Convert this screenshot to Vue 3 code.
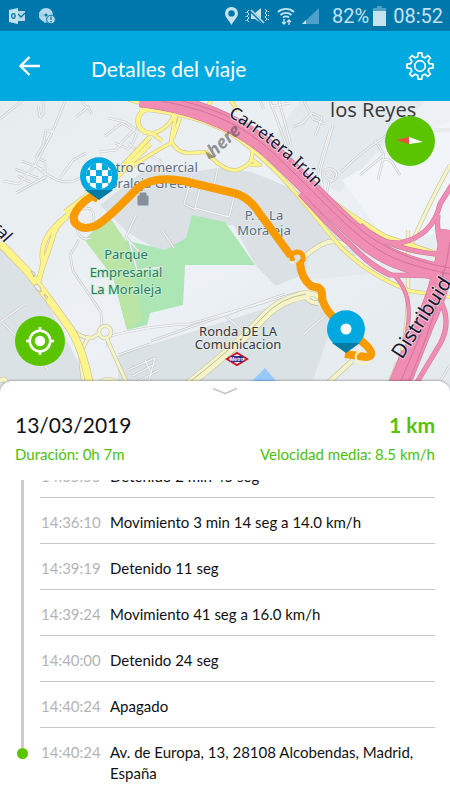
<template>
    <div class="trip">
        <div class="status">
            <div class="status__side">
                <svg width="17" height="16" viewBox="0 0 17 16">
                    <path d="M8 3h8v10H8z" fill="#b5d9ea" />
                    <path d="M9 6l3 3 4-4" fill="none" stroke="#0077ab" stroke-width="1.3" />
                    <path d="M0 2l9-2v16l-9-2z" fill="#c5e2ef" />
                    <ellipse cx="4.400" cy="8" rx="1.700" ry="2.400" fill="none" stroke="#0077ab" stroke-width="1.300" />
                </svg>
                <svg width="17" height="16" viewBox="0 0 17 16">
                    <circle cx="7" cy="7" r="7" fill="#b5d9ea" />
                    <path d="M7 7L0 4v6zM7 7l3 7-5 1z" fill="#a3cfe4" />
                    <circle cx="7" cy="7" r="1.600" fill="#0077ab" />
                    <circle cx="12" cy="11.500" r="4.300" fill="#b5d9ea" stroke="#0077ab" />
                    <path d="M12 8.500v3.500M12 13v1.500" stroke="#0077ab" stroke-width="1.300" />
                </svg>
            </div>
            <div class="status__side status__side_right">
                <svg width="13" height="18" viewBox="0 0 13 18">
                    <path fill-rule="evenodd" d="M6.500 0A6.300 6.300 0 0 0 0 6.400C0 10 4 13 6.500 18 9 13 13 10 13 6.400A6.300 6.300 0 0 0 6.500 0zm0 3.200a3.200 3.200 0 1 1 0 6.400 3.200 3.200 0 0 1 0-6.400z" fill="#c5e2ef" />
                </svg>
                <svg width="25" height="18" viewBox="0 0 25 18">
                    <path d="M6 6h4l6-5v15l-6-4H6z" fill="#c5e2ef" />
                    <path d="M5 3l13 13" stroke="#0077ab" stroke-width="3" />
                    <path d="M6 3l13 13" stroke="#c5e2ef" stroke-width="1.500" />
                    <path d="M4 3L2 5l2 2-2 2 2 2-2 2 2 2M1 5v1M1 9v1M1 13v1M20 2l2 2-2 2 2 2-2 2 2 2-2 2M23 4l1 1M23 8l1 1M23 12l1 1" fill="none" stroke="#c5e2ef" />
                </svg>
                <svg width="18" height="18" viewBox="0 0 18 18">
                    <path d="M1 5a12 12 0 0 1 16 0M3.500 8a8 8 0 0 1 11 0M6 10.500a5 5 0 0 1 6 0" fill="none" stroke="#c5e2ef" stroke-width="1.800" />
                    <path d="M7 12v5M5 15l2 2 2-2M12 18v-5M10 15l2-2 2 2" fill="none" stroke="#c5e2ef" stroke-width="1.400" />
                </svg>
                <svg width="18" height="18" viewBox="0 0 18 18">
                    <path d="M17 1v16H0z" fill="#4fa0c8" />
                    <path d="M4 13v4H0z" fill="#c5e2ef" />
                </svg>
                <span class="status__text">82%</span>
                <svg width="13" height="20" viewBox="0 0 13 20">
                    <path d="M4 0h5v2h4v4H0V2h4z" fill="#4fa0c8" />
                    <path d="M0 5h13v15H0z" fill="#c5e2ef" />
                </svg>
                <span class="status__text">08:52</span>
            </div>
        </div>

        <header class="bar">
            <button class="bar__button" aria-label="Volver">
                <svg width="22" height="20" viewBox="0 0 22 20">
                    <path d="M21 10H2M10.500 1L1.500 10l9 9" fill="none" stroke="#fff" stroke-width="2.300" />
                </svg>
            </button>
            <h1 class="bar__title">Detalles del viaje</h1>
            <button class="bar__button" aria-label="Ajustes">
                <svg width="28" height="28" viewBox="-14 -14 28 28">
                    <path :d="gearPath" fill="none" stroke="#fff" stroke-width="1.700" stroke-linejoin="round" />
                    <circle r="5.300" fill="none" stroke="#fff" stroke-width="1.700" />
                </svg>
            </button>
        </header>

        <section class="map">
            <svg class="map__canvas" viewBox="0 101 450 294" preserveAspectRatio="xMidYMid slice">
                <defs>
                    <linearGradient id="land" x1="0" y1="0" x2="1" y2="1">
                        <stop offset="0" stop-color="#e7eced" />
                        <stop offset=".5" stop-color="#edf1f5" />
                        <stop offset="1" stop-color="#e3e9ec" />
                    </linearGradient>
                    <path id="irun" d="M228 116Q280 146 330 204" />
                </defs>
                <rect y="101" width="450" height="294" fill="url(#land)" />

                <!-- districts -->
                <path d="M100 205L150 166l40 6 28-4 34 4 48 20 70 60-38 10-56 24-20-20-22-40-35-8-8 22-30 12-34-20z" fill="#dae0e3" />
                <path d="M0 247l40 42 48 92v14H0zM118 355l190-60 26 24-26 76H118z" fill="#dbe2e5" />
                <path d="M300 101h125l-86 92-70-48zM305 280l63-6-26-34-32 10z" fill="#e3e9ec" />
                <path d="M342 180l108-60v110l-60 16z" fill="#f1f4f8" />
                <path d="M85 240l23-25 17 25 40 10 21-12 6-23 33 7 30 43h-70l-2 40-33 8-3 12-20 5-14-53z" fill="#ade6b5" />
                <path d="M108 215l17 25 18 80-16 10-14-53-28-37z" fill="#bae5a5" />
                <path d="M244 389l21-21 18 21z" fill="#98caff" />

                <!-- local streets -->
                <g fill="none" stroke-linejoin="round">
                    <g v-for="pass in streetPasses" :key="pass.color" :stroke="pass.color" :stroke-width="pass.width">
                        <path v-for="street in streets" :key="street" :d="street" />
                    </g>
                </g>

                <!-- secondary roads -->
                <g fill="none" stroke-linejoin="round">
                    <g v-for="pass in palePasses" :key="pass.color" :stroke="pass.color">
                        <path v-for="road in paleRoads" :key="road.d" :d="road.d" :stroke-width="road.width + pass.extra" />
                    </g>
                    <path d="M178 391Q234 348 264 316 280 298 306 294" stroke="#bdbd9a" stroke-width="1" />
                </g>
                <g fill="none" stroke-linejoin="round">
                    <g v-for="pass in yellowPasses" :key="pass.color" :stroke="pass.color">
                        <path v-for="road in yellowRoads" :key="road.d" :d="road.d" :stroke-width="road.width + pass.extra" />
                    </g>
                    <path d="M36 284q5 1 5 8-5-1-7-6zM31 271l4 2-1 4zM44 294l4 3-2 2z" fill="#e8edf0" stroke="#c7bd9b" />
                </g>

                <!-- motorways -->
                <g fill="none" stroke-linejoin="round">
                    <g v-for="pass in pinkPasses" :key="pass.color" :stroke="pass.color">
                        <path v-for="road in pinkRoads" :key="road.d" :d="road.d" :stroke-width="road.width + pass.extra" />
                    </g>
                    <path d="M140 98C200 105 240 123 270 150 310 187 340 222 370 244 390 260 420 268 450 274M140 93C205 102 245 120 276 147 315 185 350 225 375 240 395 253 420 263 450 268M450 242Q445 281 427 319L395 395M443 270Q440 310 405 390" stroke="#d0749c" stroke-width="1" />
                </g>

                <!-- labels -->
                <g class="map__labels">
                    <g class="map__muted" text-anchor="middle">
                        <text x="145" y="172">Centro Comercial</text>
                        <text x="145" y="188">Moraleja Green</text>
                        <text x="264" y="220">P. I. La</text>
                        <text x="264" y="235">Moraleja</text>
                    </g>
                    <g class="map__park" text-anchor="middle">
                        <text x="126" y="259">Parque</text>
                        <text x="126" y="277">Empresarial</text>
                        <text x="126" y="294">La Moraleja</text>
                    </g>
                    <g class="map__dark" text-anchor="middle">
                        <text x="238" y="336">Ronda DE LA</text>
                        <text x="238" y="349">Comunicacion</text>
                    </g>
                    <text class="map__town" x="330" y="117">los Reyes</text>
                    <text class="map__road"><textPath href="#irun">Carretera Irún</textPath></text>
                    <text class="map__highway" transform="translate(402 360) rotate(-57)">Distribuid</text>
                    <text class="map__road" transform="translate(-9 228) rotate(48)">ral</text>
                    <text class="map__brand" transform="translate(214 158) rotate(-43)">here</text>
                </g>
                <path d="M205 151l4 8 6-2z" fill="#555" opacity=".6" />

                <path d="M138 196h10v9h-10zM140 196v-3h6v3" fill="#84909c" stroke="#84909c" stroke-width="1" />
                <path d="M227 359l10-6 10 6-10 6z" fill="#fff" stroke="#cc1626" stroke-width="2" />
                <path d="M231 356h12v6h-12z" fill="#252f91" />
                <text class="map__metro" x="237" y="361" text-anchor="middle">Metro</text>

                <!-- travelled route -->
                <path d="M98 199L92 196Q78 205 74 215C72 225 82 231 95 226 107 221 127 198 138 188 150 178 168 178 184 181L234 193Q246 196 255 207L291 256M300 263Q301 278 311 286L319 288Q323 291 322 299 327 313 336 319L366 345C374 353 372 357 366 357L345 354" fill="none" stroke="#f89b00" stroke-width="8" stroke-linejoin="round" />
                <path d="M293 261q-4-8 4-9 7 0 6 8l-5 5" fill="none" stroke="#f89b00" stroke-width="5" />
                <path d="M290 262l4 1M361 351q-8 3-4 10 5 6 12 1" fill="none" stroke="#f7f5bd" stroke-width="2" />

                <!-- finish and start pins -->
                <g transform="translate(99 176)">
                    <path d="M-14 14h28L0 24z" fill="#007ba2" />
                    <path d="M-13 14a19 19 0 1 1 26 0z" fill="#00a9e0" />
                    <clipPath id="flag"><circle r="13" /></clipPath>
                    <g clip-path="url(#flag)">
                        <rect x="-13" y="-13" width="26" height="26" fill="#fff" />
                        <path d="M-9-13h6v7h-6zM3-13h6v7H3zM-15-6h6v6h-6zM-3-6h6v6h-6zM9-6h6v6H9zM-9 0h6v7h-6zM3 0h6v7H3zM-3 7h6v7h-6zM-15 7h6v7h-6zM9 7h6v7H9z" fill="#00a9e0" />
                    </g>
                </g>
                <g transform="translate(346 329)">
                    <path d="M-14 14h28L0 24z" fill="#007ba2" />
                    <path d="M-13 14a19 19 0 1 1 26 0z" fill="#00a9e0" />
                    <circle r="5.500" fill="#fff" />
                </g>
            </svg>

            <button class="map__button map__button_compass" aria-label="Orientar al norte">
                <svg width="28" height="8" viewBox="0 0 28 8">
                    <path d="M0 3l13-3v7z" fill="#e8503f" />
                    <path d="M13 0l14 5-14 2z" fill="#fff" />
                </svg>
            </button>
            <button class="map__button map__button_locate" aria-label="Mi ubicación">
                <svg width="28" height="28" viewBox="-14 -14 28 28">
                    <circle r="10.300" fill="none" stroke="#fff" stroke-width="2.500" />
                    <circle r="5.200" fill="#fff" />
                    <path d="M0-14v5M0 9v5M-14 0h5M9 0h5" stroke="#fff" stroke-width="2.500" />
                </svg>
            </button>
        </section>

        <section class="sheet">
            <button class="sheet__handle" aria-label="Contraer">
                <svg width="26" height="8" viewBox="0 0 26 8">
                    <path d="M1 1.500l12 5 12-5" fill="none" stroke="#c9c9c9" stroke-width="1.700" />
                </svg>
            </button>
            <div class="sheet__summary">
                <p class="sheet__date">13/03/2019</p>
                <p class="sheet__distance">1 km</p>
                <p class="sheet__info">Duración: 0h 7m</p>
                <p class="sheet__info">Velocidad media: 8.5 km/h</p>
            </div>
            <ol class="events">
                <li v-for="(event, index) in events" :key="index" class="event">
                    <span class="event__rail"></span>
                    <div class="event__body">
                        <time class="event__time">{{ event.time }}</time>
                        <p class="event__text">{{ event.text }}</p>
                    </div>
                </li>
            </ol>
        </section>
    </div>
</template>

<script setup>
const events = [
    { time: '14:35:55', text: 'Detenido 2 min 45 seg' },
    { time: '14:36:10', text: 'Movimiento 3 min 14 seg a 14.0 km/h' },
    { time: '14:39:19', text: 'Detenido 11 seg' },
    { time: '14:39:24', text: 'Movimiento 41 seg a 16.0 km/h' },
    { time: '14:40:00', text: 'Detenido 24 seg' },
    { time: '14:40:24', text: 'Apagado' },
    { time: '14:40:24', text: 'Av. de Europa, 13, 28108 Alcobendas, Madrid, España' },
]

// Gear outline: eight teeth around the centre
function buildGear(){
    const points = [];
    for(let i = 0; i < 8; i++){
        const steps = [[-14, 9.6], [-8, 13.2], [8, 13.2], [14, 9.6]];
        steps.forEach(([offset, radius]) => {
            const angle = (i * 45 + offset) * Math.PI / 180;
            points.push(`${(Math.cos(angle) * radius).toFixed(1)} ${(Math.sin(angle) * radius).toFixed(1)}`);
        })
    }
    return `M${points.join('L')}Z`;
}
const gearPath = buildGear();

// Every road is drawn twice: casing first, then the fill
const streetPasses = [
    { color: '#c9cccd', width: 2.6 },
    { color: '#f1f3f4', width: 1.3 },
]
const palePasses = [
    { color: '#c3c2a2', extra: 1.2 },
    { color: '#f5f4c8', extra: 0 },
]
const yellowPasses = [
    { color: '#cfc08f', extra: 1.2 },
    { color: '#fdf48c', extra: 0 },
]
const pinkPasses = [
    { color: '#d0799b', extra: 1.2 },
    { color: '#f08db3', extra: 0 },
]

const streets = [
    'M65 101L52 133 35 165Q62 190 80 178M54 132L46 130 43 146 36 157 46 162M22 101L0 119M35 165L19 184 3 181M16 193l22-12 7-4M45 164v14l-10 4M22 161l20 8M15 169l23 9M18 176l12 6M60 178l13-18 13-7M38 106l2 11 4-4-1-12',
    'M76 117l12-10 4 7M82 101l5 7M105 136l17-13 16 10M108 118l17 4 10 7-13 13-6 8-17 2M138 124q-1 16-10 25l-13-6M128 143l11 9',
    'M218 168l-4 17M200 188l-5 20 34 9 7-28M196 210l-12-6 8-28M150 157q10 0 15 11l2 16M270 101l18 48M279 101l12 44M272 106l18-3M293 127l12-5M260 101l4 8',
    'M300 125l12-12 10 5-7 18M333 125l-12 43q-2 7 2 18M330 130l-12 41 7 27M341 172Q360 152 392 132M331 172q5 5 0 8-8-3-7-9 6-5 12 1 2 8-6 10M329 182l-3 14M375 140l9 15-24 20M384 155l-6 25M381 160q10-2 12 4l7 11M394 132l-8-12M434 130h16M304 101l9 18 12 5',
    'M70 255l3 16 28 41 1 14M79 240l-9 15M129 240l8 30 26-3M136 215l-10 22 14 16M162 230l12 18',
    'M0 322l25-18M2 322l46 47M109 335l-2 12M106 337Q150 325 190 324L300 292M118 355l32-11M226 316l20 18M128 370l27-12-8 30M133 376l22-12M137 382l22-12M145 360l7 15M303 335l24-21M151 341l134-47',
    'M71 218q8-13 20-9 8 11-5 19zM77 230q4 12 14 8M450 365l-9 15',
]

const paleRoads = [
    { d: 'M180 391Q234 349 264 317 280 299 310 294', width: 8 },
    { d: 'M304 296Q316 290 321 302M300 292q10 12 18 11M304 257q14-12 24-15 10-2 18 4M325 386l27-25', width: 4 },
    { d: 'M410 248Q423 215 450 165M408 230v68q-1 42-11 73l-14 24M389 384l9-22', width: 3 },
    { d: 'M67 324q10 14 25 14l8-5M106 337l24 53M89 337q-10 14-8 26l2 17M97 386q10-14 26 0', width: 3 },
    { d: 'M105 326a6 6 0 1 1 0 12a6 6 0 1 1 0-12z', width: 3 },
    { d: 'M0 381q6-5 7 5', width: 4 },
]

const yellowRoads = [
    { d: 'M150 144L111 183 65 217Q38 238 43 263L39 281M67 217Q54 227 52 240L38 281M150 137L115 174 65 212', width: 4 },
    { d: 'M0 243L28 272 48 298 69 327Q83 347 91 391', width: 7 },
    { d: 'M176 114l-5 26q5 13 18 13l17-1q18 20 31 18 17-5 15-19M171 143l-13 7-29 18M174 115q-6 15-24 19M180 118l-7 20M162 141l-10-8M211 101q-4 8-10 5M231 101l7 10M252 160l8 5h-10', width: 3 },
    { d: 'M150 109a12 12 0 1 0 0 24M126 98l26 8', width: 4 },
    { d: 'M140 109Q208 116 240 140T301 199L338 244Q367 275 410 291L450 297', width: 3 },
    { d: 'M270 150L316 190 344 211 385 237 450 259', width: 5 },
]

const pinkRoads = [
    { d: 'M140 98C200 105 240 125 270 150 310 187 340 222 372 246 392 261 420 268 450 275', width: 17 },
    { d: 'M300 194Q333 230 350 244 372 268 390 275L440 276', width: 4 },
    { d: 'M325 211Q364 243 400 243 433 236 440 204L452 185M438 215q-3 24 12 57', width: 4 },
    { d: 'M360 225Q392 253 450 255', width: 4 },
    { d: 'M352 246Q375 268 395 276 416 298 405 340', width: 3 },
    { d: 'M450 230Q443 285 425 322L396 395', width: 19 },
    { d: 'M442 304q9 20-2 40l-27 45M404 351l-17 42', width: 4 },
]
</script>

<style>
body {
    background: #fff;
}
</style>

<style scoped>
.trip {
    display: flex;
    flex-direction: column;
    height: 100vh;
    background: #fff;
    font-family: Lato, "Liberation Sans", sans-serif;
    color: #111;
}
p, h1, ol {
    margin: 0;
    padding: 0;
}
button {
    display: flex;
    align-items: center;
    justify-content: center;
    padding: 0;
    border: none;
    background: none;
    cursor: pointer;
}
svg {
    display: block;
}

.status {
    box-sizing: border-box;
    display: flex;
    flex: none;
    align-items: center;
    justify-content: space-between;
    height: 31px;
    padding: 1px 7px 0 9px;
    background: #0077ab;
}
.status__side {
    display: flex;
    align-items: center;
    gap: 13px;
}
.status__side_right {
    gap: 7px;
}
.status__text {
    font-family: Roboto, sans-serif;
    font-size: 20px;
    line-height: 32px;
    color: #c5e2ef;
}
.status__side_right .status__text:nth-of-type(1) {
    margin-left: 5px;
    margin-right: -3px;
}

.bar {
    display: flex;
    flex: none;
    align-items: center;
    height: 70px;
    padding: 0 16px 0 19px;
    background: #00a9e0;
    color: #fff;
}
.bar__title {
    flex: 1;
    padding: 6px 0 0 50px;
    font-size: 21px;
    line-height: 28px;
    font-weight: 400;
}

.map {
    position: relative;
    flex: none;
    height: 294px;
}
.map__canvas {
    width: 100%;
    height: 100%;
}
.map__labels {
    font-family: "Noto Sans", sans-serif;
    font-size: 13px;
    paint-order: stroke;
    stroke: rgba(238, 242, 244, 0.6);
    stroke-width: 2px;
    stroke-linejoin: round;
}
.map__muted {
    fill: #5d6f82;
}
.map__park {
    fill: #2b7a6a;
    stroke: #c8efca;
}
.map__dark {
    fill: #38383c;
}
.map__town {
    fill: #3c3c40;
    font-size: 20px;
}
.map__road {
    fill: #17172f;
    font-size: 17px;
}
.map__highway {
    fill: #17172f;
    font-size: 20px;
}
.map__brand {
    fill: #555;
    fill-opacity: 0.6;
    stroke: none;
    font-size: 18px;
    font-style: italic;
    font-weight: 700;
}
.map__metro {
    fill: #fff;
    font-family: "Liberation Sans", sans-serif;
    font-size: 5px;
    font-weight: 700;
}
.map__button {
    position: absolute;
    width: 50px;
    height: 50px;
    border-radius: 50%;
    background: #5ac400;
}
.map__button_compass {
    top: 15px;
    right: 15px;
}
.map__button_locate {
    bottom: 29px;
    left: 15px;
}

.sheet {
    position: relative;
    display: flex;
    flex: 1;
    flex-direction: column;
    min-height: 0;
    margin-top: -14px;
    border-radius: 12px 12px 0 0;
    background: #fff;
    box-shadow: 0 -1px 2px rgba(0, 0, 0, 0.25);
}
.sheet__handle {
    flex: none;
    height: 20px;
}
.sheet__summary {
    display: grid;
    flex: none;
    grid-template-columns: auto auto;
    justify-content: space-between;
    padding: 8px 15px 13px;
}
.sheet__date,
.sheet__distance {
    font-size: 21px;
    line-height: 32px;
}
.sheet__distance {
    color: #55c20a;
    font-weight: 700;
    text-align: right;
}
.sheet__info {
    color: #4cc00c;
    font-size: 15px;
    line-height: 26px;
}

/* The list is scrolled to its end, older events run out at the top */
.events {
    display: flex;
    flex: 1;
    flex-direction: column;
    justify-content: flex-end;
    min-height: 0;
    overflow: hidden;
    list-style: none;
}
.event {
    position: relative;
    display: flex;
    flex: none;
    padding: 0 15px 0 21px;
}
.event__rail {
    width: 3px;
    margin-right: 16px;
    background: #ccc;
}
.event__body {
    display: flex;
    flex: 1;
    gap: 10px;
    padding: 14px 0 10px 1px;
    border-bottom: 1px solid #c8c8c8;
    font-size: 15px;
    line-height: 21px;
}
.event__time {
    flex: none;
    width: 59px;
    color: #b4b4b4;
}
.event:last-child .event__rail {
    height: 25px;
}
.event:last-child .event__rail::after {
    content: '';
    position: absolute;
    top: 20px;
    left: 17px;
    width: 11px;
    height: 11px;
    border-radius: 50%;
    background: #5ac400;
}
.event:last-child .event__body {
    padding-bottom: 16px;
    border-bottom: none;
}
</style>
